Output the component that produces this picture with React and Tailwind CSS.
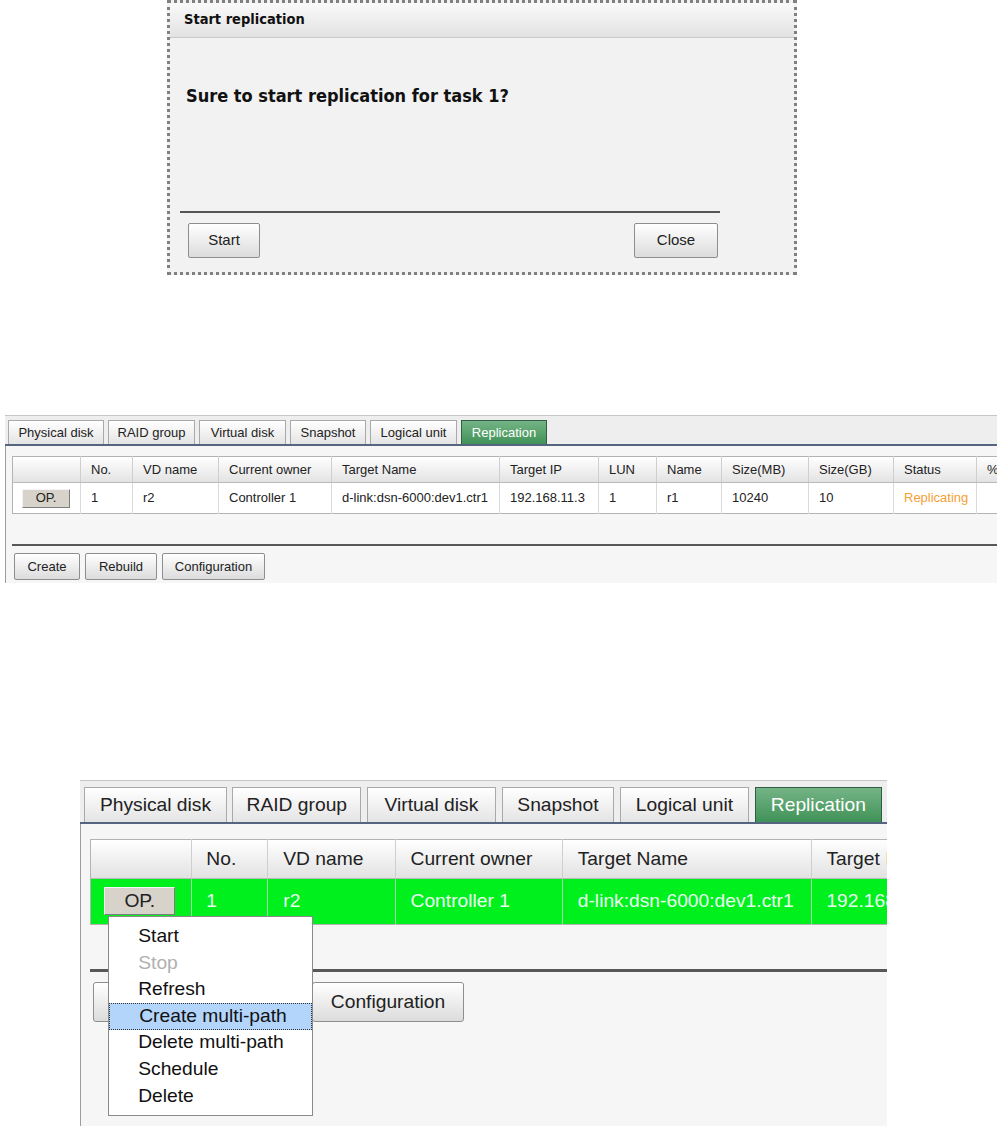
import React from 'react';

const tabs = [
  { label: 'Physical disk', w: 'w-[96px]' },
  { label: 'RAID group', w: 'w-[87px]' },
  { label: 'Virtual disk', w: 'w-[87px]' },
  { label: 'Snapshot', w: 'w-[76px]' },
  { label: 'Logical unit', w: 'w-[87px]' },
  { label: 'Replication', w: 'w-[86px]', active: true },
];

const columns = [
  { label: '', w: 'w-[68px]' },
  { label: 'No.', w: 'w-[52px]' },
  { label: 'VD name', w: 'w-[86px]' },
  { label: 'Current owner', w: 'w-[113px]' },
  { label: 'Target Name', w: 'w-[168px]' },
  { label: 'Target IP', w: 'w-[99px]' },
  { label: 'LUN', w: 'w-[58px]' },
  { label: 'Name', w: 'w-[65px]' },
  { label: 'Size(MB)', w: 'w-[87px]' },
  { label: 'Size(GB)', w: 'w-[85px]' },
  { label: 'Status', w: 'w-[83px]' },
  { label: '%', w: 'w-[60px]' },
];

const rowValues = ['1', 'r2', 'Controller 1', 'd-link:dsn-6000:dev1.ctr1', '192.168.11.3', '1', 'r1', '10240', '10'];

const menuItems = [
  { label: 'Start' },
  { label: 'Stop', disabled: true },
  { label: 'Refresh' },
  { label: 'Create multi-path', hover: true },
  { label: 'Delete multi-path' },
  { label: 'Schedule' },
  { label: 'Delete' },
];

function GrayButton({ children, className = '' }) {
  return (
    <button className={`flex items-center justify-center border border-[#8e8e8e] rounded-[2px] bg-linear-to-b from-white to-[#dcdcdc] text-[#222] ${className}`}>
      {children}
    </button>
  );
}

function ConfirmDialog() {
  return (
    <div className="ml-[167px] w-[630px] h-[275px] border-[3px] border-dotted border-[#808080] bg-[#f2f2f2] flex flex-col font-['DejaVu_Sans_Condensed','DejaVu_Sans',sans-serif] [font-stretch:condensed]">
      <div className="h-[35px] shrink-0 flex items-center pl-[14px] bg-linear-to-b from-[#fafafa] to-[#e2e2e2] border-b border-[#c9c9c9]">
        <span className="text-[14.5px] font-bold text-[#111]">Start replication</span>
      </div>
      <div className="pl-[16px] pt-[44px] text-[18px] font-bold text-[#111]">Sure to start replication for task 1?</div>
      <div className="flex-grow" />
      <div className="ml-[10px] w-[540px] h-[2px] bg-[#555]" />
      <div className="flex justify-between w-[530px] ml-[18px] mt-[10px] mb-[14px] font-['Liberation_Sans',Arial,sans-serif] [font-stretch:normal]">
        <GrayButton className="w-[72px] h-[35px] text-[15px]">Start</GrayButton>
        <GrayButton className="w-[84px] h-[35px] text-[15px]">Close</GrayButton>
      </div>
    </div>
  );
}

function ReplicationPanel({ selected = false, showMenu = false }) {
  const sep = selected ? 'border-[#a6dcaa]' : 'border-[#dadada]';
  return (
    <div className="h-full overflow-hidden bg-[#f6f6f6] font-['Liberation_Sans',Arial,sans-serif] text-[13px] text-[#222]">
      {/* tab strip */}
      <div className="flex items-end gap-[4px] pl-[3px] pt-[4px] bg-[#eeeeee] border-t border-[#c6c6c6] border-b-2 border-b-[#56657f]">
        {tabs.map((tab) => (
          <div
            key={tab.label}
            className={`${tab.w} h-[24px] shrink-0 flex items-center justify-center border border-b-0 ${
              tab.active
                ? 'bg-linear-to-b from-[#74b486] to-[#3f9257] border-[#2f5e44] text-white'
                : 'bg-linear-to-b from-white to-[#e4e4e4] border-[#a9a9a9]'
            }`}
          >
            {tab.label}
          </div>
        ))}
      </div>

      <div className="border-l border-[#9c9c9c] h-full pl-[6px] pt-[10px]">
        <div className="relative">
          <table className="table-fixed border-collapse w-[1024px] border border-[#b3b3b3]">
            <colgroup>
              {columns.map((c, i) => (
                <col key={i} className={c.w} />
              ))}
            </colgroup>
            <thead>
              <tr className="h-[26px] bg-linear-to-b from-white to-[#e2e2e2]">
                {columns.map((c, i) => (
                  <th key={i} className="font-normal text-left pl-[10px] border-r border-b border-[#cfcfcf] border-b-[#b9b9b9] whitespace-nowrap overflow-hidden">
                    {c.label}
                  </th>
                ))}
              </tr>
            </thead>
            <tbody>
              <tr className={`h-[31px] ${selected ? 'bg-[#00f01e] text-[#eafff0]' : 'bg-white'}`}>
                <td className={`border-r ${sep} pl-[9px]`}>
                  <div className="w-[48px] h-[19px] flex items-center justify-center bg-[#d7d3cb] border border-t-[#f4f4f4] border-l-[#f4f4f4] border-r-[#7e7e7e] border-b-[#7e7e7e] text-[#222]">
                    OP.
                  </div>
                </td>
                {rowValues.map((v, i) => (
                  <td key={i} className={`pl-[10px] whitespace-nowrap overflow-hidden border-r ${sep}`}>
                    {v}
                  </td>
                ))}
                <td className={`pl-[10px] border-r ${sep} text-[#f6a033]`}>Replicating</td>
                <td />
              </tr>
            </tbody>
          </table>

          {showMenu && (
            <div className="absolute left-[12px] top-[52px] w-[139px] bg-white border border-[#8a8a8a] py-[4px] z-10">
              {menuItems.map((m) => (
                <div
                  key={m.label}
                  className={`h-[18px] pl-[20px] flex items-center whitespace-nowrap ${
                    m.hover ? 'bg-[#b3d4fb] border border-dotted border-[#333] pl-[19px]' : ''
                  } ${m.disabled ? 'text-[#b0b0b0]' : 'text-[#111]'}`}
                >
                  {m.label}
                </div>
              ))}
            </div>
          )}
        </div>

        <div className="mt-[30px] h-[2px] bg-[#585858]" />
        <div className="flex gap-[5px] mt-[7px] ml-[2px] pb-[3px]">
          <GrayButton className="w-[66px] h-[27px]">Create</GrayButton>
          <GrayButton className="w-[72px] h-[27px]">Rebuild</GrayButton>
          <GrayButton className="w-[103px] h-[27px]">Configuration</GrayButton>
        </div>
      </div>
    </div>
  );
}

export default function App() {
  return (
    <div className="w-[997px] h-[1126px] overflow-hidden bg-white">
      <ConfirmDialog />

      <div className="mt-[140px] ml-[5px] w-[992px] h-[168px]">
        <ReplicationPanel />
      </div>

      {/* enlarged view of the same panel with the OP. menu open */}
      <div className="mt-[197px] ml-[80px] w-[807px] h-[346px] overflow-hidden">
        <div className="[zoom:1.48] w-[545px] h-[234px]">
          <ReplicationPanel selected showMenu />
        </div>
      </div>
    </div>
  );
}
